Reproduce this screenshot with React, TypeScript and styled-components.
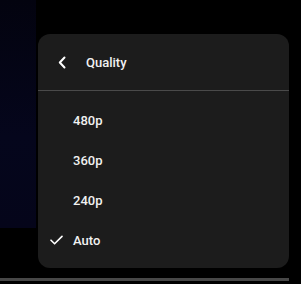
import React from "react";
import styled, { createGlobalStyle } from "styled-components";

const GlobalStyle = createGlobalStyle`
  html, body {
    margin: 0;
    padding: 0;
    background: #000;
    font-family: Roboto, "Liberation Sans", sans-serif;
  }
`;

const Player = styled.div`
  position: relative;
  width: 301px;
  height: 284px;
  background: #000;
  overflow: hidden;
`;

const VideoFrame = styled.div`
  height: 278px;
  display: flex;
`;

const Letterbox = styled.div`
  width: 36px;
  height: 228px;
  background: linear-gradient(180deg, #03030f 0%, #05061c 60%, #05051a 100%);
`;

const Progress = styled.div`
  width: 289px;
  height: 3px;
  background: #474747;
`;

const Menu = styled.div`
  position: absolute;
  left: 38px;
  top: 34px;
  width: 251px;
  height: 234px;
  border-radius: 12px;
  background: #1c1c1c;
  display: flex;
  flex-direction: column;
  color: #f1f1f1;
`;

const Header = styled.div`
  height: 56px;
  display: flex;
  align-items: center;
  padding-left: 18px;
  border-bottom: 1px solid #4a4a4a;
`;

const BackButton = styled.span`
  width: 12px;
  height: 14px;
  display: flex;
  align-items: center;
  justify-content: center;
  margin-right: 18px;
`;

const Title = styled.span`
  font-size: 13px;
  font-weight: 500;
`;

const List = styled.div`
  padding: 9px 0 8px;
  display: flex;
  flex-direction: column;
`;

const Item = styled.div<{ $active?: boolean }>`
  height: 40px;
  display: flex;
  align-items: center;
  font-size: 13px;
  font-weight: 500;
`;

const CheckSlot = styled.span`
  width: 35px;
  display: flex;
  justify-content: flex-start;
  padding-left: 12px;
  box-sizing: border-box;
`;

const qualities = ["480p", "360p", "240p", "Auto"];

export default function App() {
  const selected = "Auto";
  return (
    <>
      <GlobalStyle />
      <Player>
        <VideoFrame>
          <Letterbox />
        </VideoFrame>
        <Progress />
        <Menu>
          <Header>
            <BackButton>
              <svg width="8" height="13" viewBox="0 0 8 13">
                <path d="M6.5 1.5L1.8 6.5l4.7 5" fill="none" stroke="#fff" strokeWidth="2" strokeLinecap="round" strokeLinejoin="round" />
              </svg>
            </BackButton>
            <Title>Quality</Title>
          </Header>
          <List>
            {qualities.map((q) => (
              <Item key={q} $active={q === selected}>
                <CheckSlot>
                  {q === selected && (
                    <svg width="13" height="10" viewBox="0 0 13 10">
                      <path d="M1 5.2l3.6 3.6L12 1.4" fill="none" stroke="#fff" strokeWidth="1.6" strokeLinecap="round" strokeLinejoin="round" />
                    </svg>
                  )}
                </CheckSlot>
                {q}
              </Item>
            ))}
          </List>
        </Menu>
      </Player>
    </>
  );
}
